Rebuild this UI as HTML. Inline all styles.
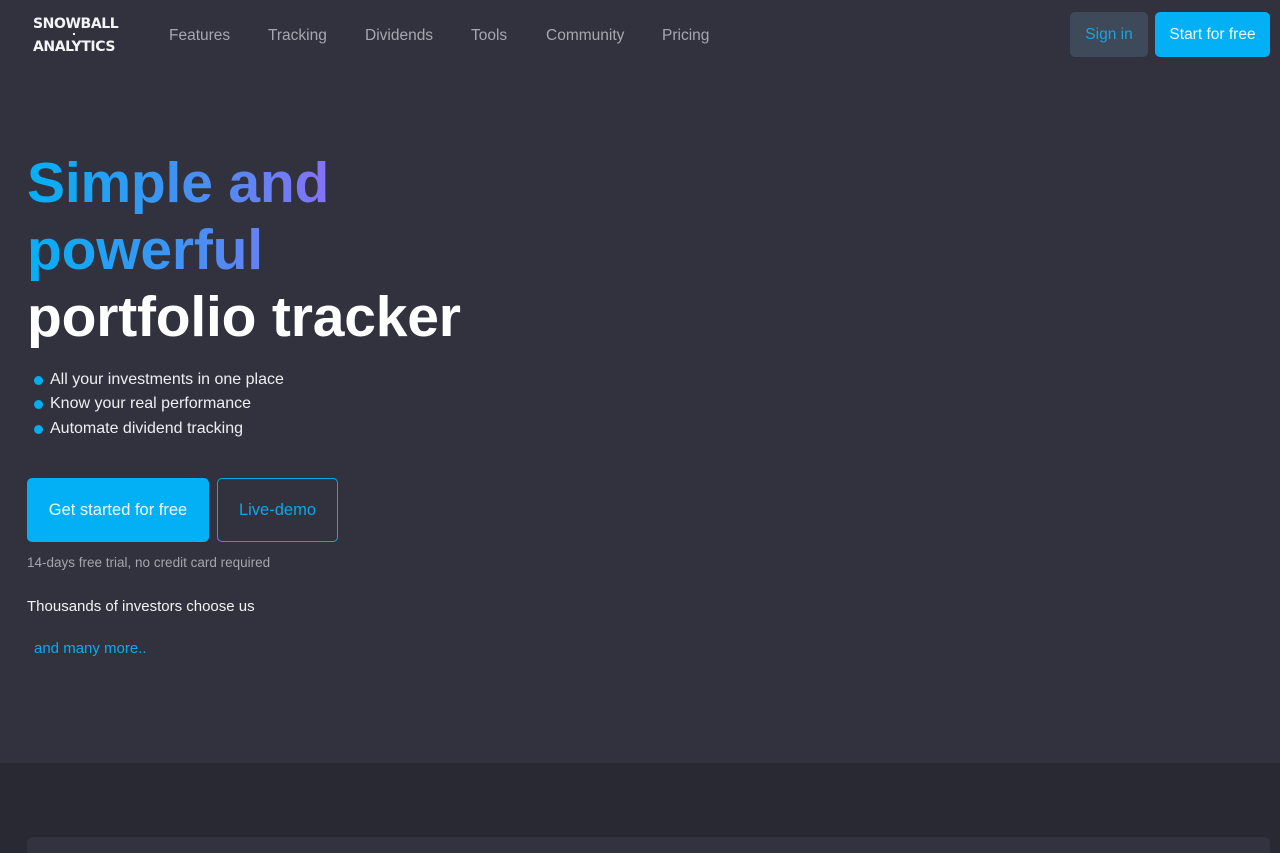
<!DOCTYPE html>
<html><head><meta charset="utf-8"><style>
*{margin:0;padding:0;box-sizing:border-box}
html,body{width:1280px;height:853px;overflow:hidden}
body{background:#32323e;font-family:"Liberation Sans",Arial,sans-serif;position:relative}
.logo{position:absolute;left:33px;top:13px;color:#f4f4f6;font-family:"DejaVu Sans","Liberation Sans",sans-serif;font-weight:bold;font-size:14px;line-height:23px;letter-spacing:-0.4px}
.logo .dot{position:absolute;left:40px;top:20px;width:2px;height:2px;background:#fff}
.nav a{position:absolute;top:27px;color:#a6a7b1;font-size:15.5px;text-decoration:none}
.btn{position:absolute;border-radius:5px;font-size:15.5px;display:flex;align-items:center;justify-content:center}
h1{position:absolute;left:27px;top:150px;font-size:57px;line-height:67px;font-weight:bold;color:#fff;letter-spacing:-0.2px}
.g{background:linear-gradient(to right,#04b0f5 0%,#4f8cf2 60%,#8a70f4 100%);-webkit-background-clip:text;background-clip:text;color:transparent;display:inline-block;width:310px}
ul{position:absolute;left:34px;top:368px;list-style:none;color:#eceef2;font-size:16px;line-height:24.3px}
li{position:relative;padding-left:16px}
li:before{content:"";position:absolute;left:0;top:8px;width:9px;height:9px;border-radius:50%;background:#03adf0}
.small{position:absolute;left:27px;top:555px;color:#a4a5ad;font-size:13.5px}
.th{position:absolute;left:27px;top:598px;color:#f2f2f4;font-size:15px}
.more{position:absolute;left:34px;top:640px;color:#0ea9ee;font-size:15px}
.lower{position:absolute;left:0;top:763px;width:1280px;height:90px;background:#292933}
.card{position:absolute;left:27px;top:837px;width:1243px;height:16px;background:#33333f;border-radius:6px 6px 0 0}
</style></head><body>
<div class="logo">SNOWBALL<br>ANALYTICS<span class="dot"></span></div>
<div class="nav">
<a style="left:169px">Features</a><a style="left:268px">Tracking</a><a style="left:365px">Dividends</a><a style="left:471px">Tools</a><a style="left:546px">Community</a><a style="left:662px">Pricing</a>
</div>
<div class="btn" style="left:1070px;top:12px;width:78px;height:45px;background:#3e4a59;color:#1aa3e0">Sign in</div>
<div class="btn" style="left:1155px;top:12px;width:115px;height:45px;background:#03b0f5;color:#eaf8ff">Start for free</div>
<h1><span class="g">Simple and<br>powerful</span><br>portfolio tracker</h1>
<ul><li>All your investments in one place</li><li>Know your real performance</li><li>Automate dividend tracking</li></ul>
<div class="btn" style="left:27px;top:478px;width:182px;height:64px;background:#03b0f5;color:#f1fbff;font-size:16.5px">Get started for free</div>
<div class="btn" style="left:217px;top:478px;width:121px;height:64px;border:1px solid #0ea6e9;color:#0ea6e9;font-size:16.5px">Live-demo</div>
<div class="small">14-days free trial, no credit card required</div>
<div class="th">Thousands of investors choose us</div>
<div class="more">and many more..</div>
<div class="lower"></div>
<div class="card"></div>
</body></html>
